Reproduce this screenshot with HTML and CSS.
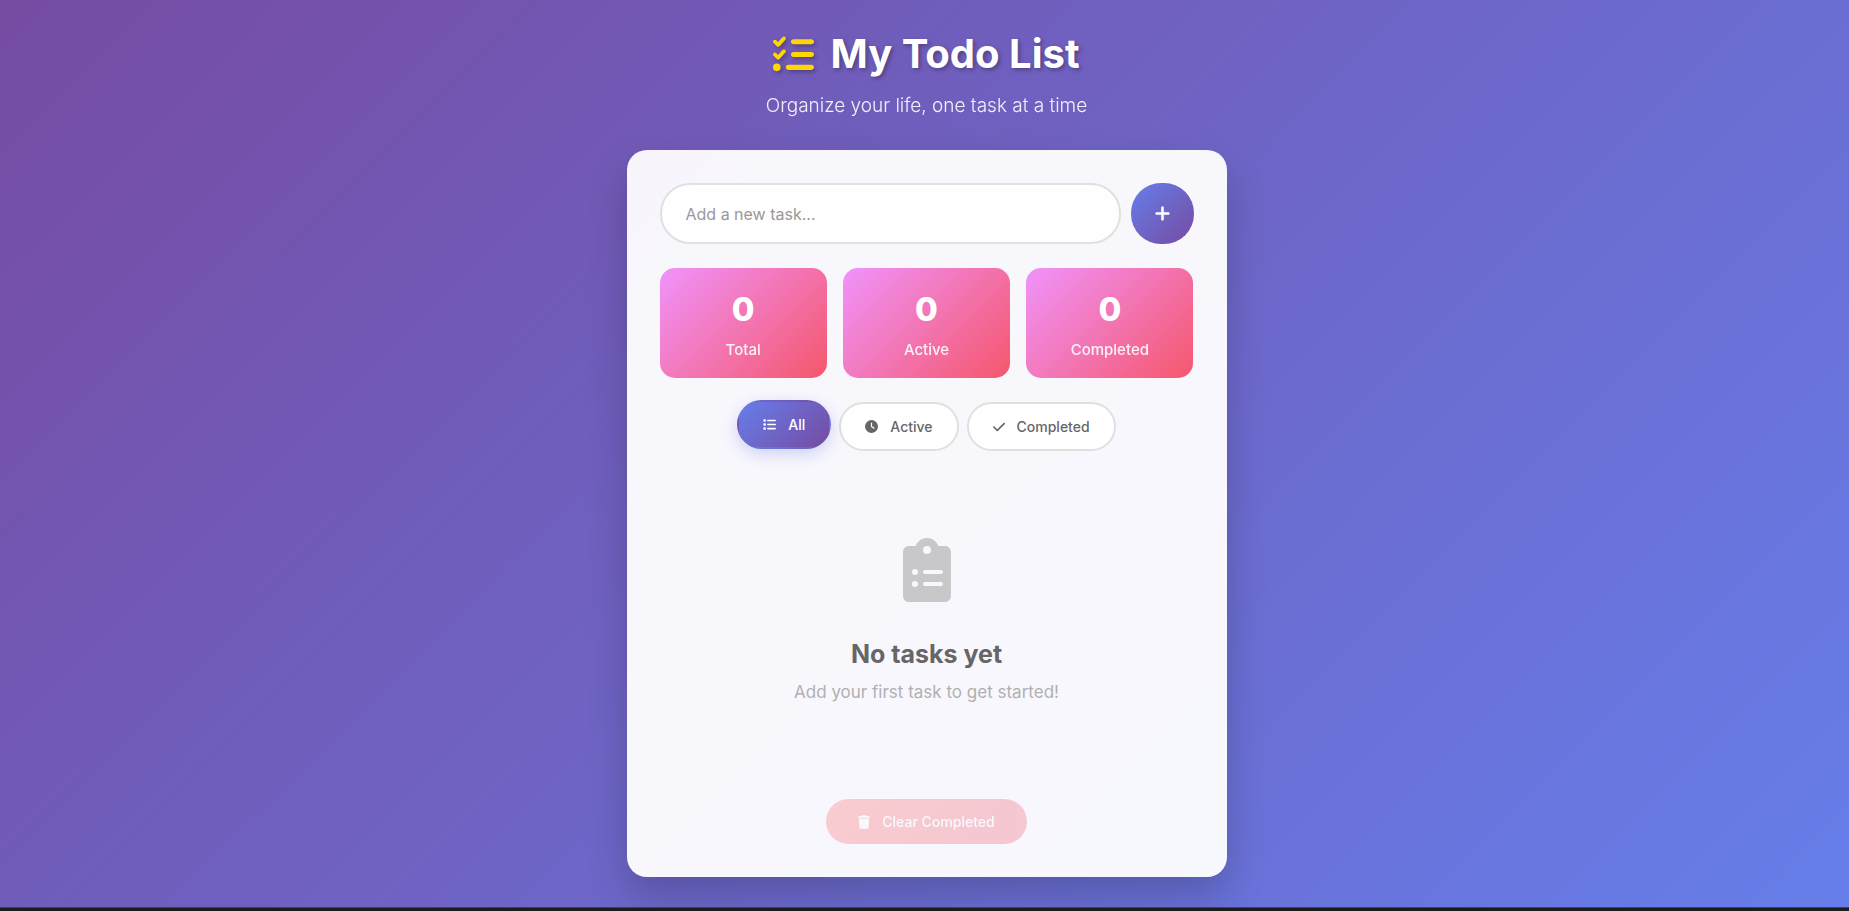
FILE: index.html
```html
<!DOCTYPE html>
<html lang="en">
<head>
<meta charset="utf-8">
<meta name="viewport" content="width=device-width, initial-scale=1">
<title>My Todo List</title>
<link rel="stylesheet" href="styles.css">
</head>
<body>
<div class="page">
  <header class="header">
    <h1 class="title">
      <svg class="title-icon" viewBox="0 0 512 512" aria-hidden="true"><path d="M152.1 38.2c9.9 8.9 10.7 24 1.8 33.9l-72 80c-4.4 4.9-10.6 7.8-17.2 7.9s-12.9-2.4-17.6-7L7 113C-2.3 103.6-2.3 88.4 7 79s24.6-9.4 33.9 0l22.1 22.1 55.1-61.2c8.9-9.9 24-10.7 33.9-1.8zm0 160c9.9 8.9 10.7 24 1.8 33.9l-72 80c-4.4 4.9-10.6 7.8-17.2 7.9s-12.9-2.4-17.6-7L7 273c-9.4-9.4-9.4-24.6 0-33.9s24.6-9.4 33.9 0l22.1 22.1 55.1-61.2c8.9-9.9 24-10.7 33.9-1.8zM224 96c0-17.7 14.3-32 32-32H480c17.7 0 32 14.3 32 32s-14.3 32-32 32H256c-17.7 0-32-14.3-32-32zm0 160c0-17.7 14.3-32 32-32H480c17.7 0 32 14.3 32 32s-14.3 32-32 32H256c-17.7 0-32-14.3-32-32zM160 416c0-17.7 14.3-32 32-32H480c17.7 0 32 14.3 32 32s-14.3 32-32 32H192c-17.7 0-32-14.3-32-32zM48 368a48 48 0 1 1 0 96 48 48 0 1 1 0-96z"/></svg>
      <span>My Todo List</span>
    </h1>
    <p class="subtitle">Organize your life, one task at a time</p>
  </header>

  <main class="card">
    <form class="add-form">
      <input class="add-input" type="text" placeholder="Add a new task..." aria-label="New task">
      <button class="add-button" type="button" aria-label="Add task">
        <svg class="plus-icon" viewBox="0 0 448 512" aria-hidden="true"><path d="M256 80c0-17.7-14.3-32-32-32s-32 14.3-32 32V224H48c-17.7 0-32 14.3-32 32s14.3 32 32 32H192V432c0 17.7 14.3 32 32 32s32-14.3 32-32V288H400c17.7 0 32-14.3 32-32s-14.3-32-32-32H256V80z"/></svg>
      </button>
    </form>

    <section class="stats" aria-label="Task counts">
      <div class="stat"><span class="stat-number">0</span><span class="stat-label">Total</span></div>
      <div class="stat"><span class="stat-number">0</span><span class="stat-label">Active</span></div>
      <div class="stat"><span class="stat-number">0</span><span class="stat-label">Completed</span></div>
    </section>

    <nav class="filters" aria-label="Filter tasks">
      <button class="filter filter-active" type="button">
        <svg class="icon" viewBox="0 0 512 512" aria-hidden="true"><path d="M40 48C26.7 48 16 58.7 16 72v48c0 13.3 10.7 24 24 24H88c13.3 0 24-10.7 24-24V72c0-13.3-10.7-24-24-24H40zM192 64c-17.7 0-32 14.3-32 32s14.3 32 32 32H480c17.7 0 32-14.3 32-32s-14.3-32-32-32H192zm0 160c-17.7 0-32 14.3-32 32s14.3 32 32 32H480c17.7 0 32-14.3 32-32s-14.3-32-32-32H192zm0 160c-17.7 0-32 14.3-32 32s14.3 32 32 32H480c17.7 0 32-14.3 32-32s-14.3-32-32-32H192zM16 232v48c0 13.3 10.7 24 24 24H88c13.3 0 24-10.7 24-24V232c0-13.3-10.7-24-24-24H40c-13.3 0-24 10.7-24 24zM40 368c-13.3 0-24 10.7-24 24v48c0 13.3 10.7 24 24 24H88c13.3 0 24-10.7 24-24V392c0-13.3-10.7-24-24-24H40z"/></svg>
        <span>All</span>
      </button>
      <button class="filter" type="button">
        <svg class="icon" viewBox="0 0 512 512" aria-hidden="true"><path fill-rule="evenodd" d="M256 0a256 256 0 1 1 0 512A256 256 0 1 1 256 0zM232 120V256c0 8 4 15.5 10.7 20l96 64c11 7.4 25.9 4.4 33.3-6.7s4.4-25.9-6.7-33.3L280 243.2V120c0-13.3-10.7-24-24-24s-24 10.7-24 24z"/></svg>
        <span>Active</span>
      </button>
      <button class="filter" type="button">
        <svg class="icon icon-narrow" viewBox="0 0 448 512" aria-hidden="true"><path d="M438.6 105.4c12.5 12.5 12.5 32.8 0 45.3l-256 256c-12.5 12.5-32.8 12.5-45.3 0l-128-128c-12.5-12.5-12.5-32.8 0-45.3s32.8-12.5 45.3 0L160 338.7 393.4 105.4c12.5-12.5 32.8-12.5 45.3 0z"/></svg>
        <span>Completed</span>
      </button>
    </nav>

    <section class="empty">
      <svg class="empty-icon" viewBox="0 0 384 512" aria-hidden="true"><path fill-rule="evenodd" d="M192 0c-41.8 0-77.4 26.7-90.5 64H48C21.5 64 0 85.5 0 112V464c0 26.5 21.5 48 48 48H336c26.5 0 48-21.5 48-48V112c0-26.5-21.5-48-48-48H282.5C269.4 26.7 233.8 0 192 0zm0 64a32 32 0 1 1 0 64 32 32 0 1 1 0-64zM72 272a24 24 0 1 1 48 0 24 24 0 1 1-48 0zm104-16H304c8.8 0 16 7.2 16 16s-7.2 16-16 16H176c-8.8 0-16-7.2-16-16s7.2-16 16-16zM72 368a24 24 0 1 1 48 0 24 24 0 1 1-48 0zm104-16H304c8.8 0 16 7.2 16 16s-7.2 16-16 16H176c-8.8 0-16-7.2-16-16s7.2-16 16-16z"/></svg>
      <h2 class="empty-title">No tasks yet</h2>
      <p class="empty-text">Add your first task to get started!</p>
    </section>

    <button class="clear-button" type="button" disabled>
      <svg class="icon icon-narrow" viewBox="0 0 448 512" aria-hidden="true"><path d="M135.2 17.7L128 32H32C14.3 32 0 46.3 0 64S14.3 96 32 96H416c17.7 0 32-14.3 32-32s-14.3-32-32-32H320l-7.2-14.3C307.4 6.8 296.3 0 284.2 0H163.8c-12.1 0-23.2 6.8-28.6 17.7zM416 128H32L53.2 467c1.6 25.3 22.6 45 47.9 45H346.9c25.3 0 46.3-19.7 47.9-45L416 128z"/></svg>
      <span>Clear Completed</span>
    </button>
  </main>
</div>
<div class="bottom-bar"></div>
</body>
</html>
```

FILE: styles.css
```css
* {
  box-sizing: border-box;
  margin: 0;
  padding: 0;
}

body {
  display: flex;
  flex-direction: column;
  min-height: 100vh;
  font-family: Inter, "Open Sans", sans-serif;
  background: linear-gradient(135deg, #764ba2 0%, #667eea 100%);
}

button,
input {
  font-family: inherit;
}

svg {
  display: block;
  flex: none;
  fill: currentColor;
}

.page {
  flex: 1;
  width: 100%;
  max-width: 640px;
  margin: 0 auto;
  padding: 20px 18px 30px 22px;
}

.header {
  margin-bottom: 30px;
  text-align: center;
  color: #fff;
}

.title {
  display: flex;
  justify-content: center;
  align-items: center;
  gap: 16px;
  margin-bottom: 6px;
  padding-top: 2px;
  font-size: 40px;
  font-weight: 700;
  line-height: 64px;
  text-shadow: 2px 2px 4px rgba(0, 0, 0, 0.3);
}

.title-icon {
  width: 41px;
  height: 41px;
  color: #ffd700;
  filter: drop-shadow(2px 2px 2px rgba(0, 0, 0, 0.3));
}

.subtitle {
  font-size: 19px;
  font-weight: 300;
  line-height: 28px;
  opacity: 0.9;
}

.card {
  padding: 33px;
  border-radius: 20px;
  background: rgba(255, 255, 255, 0.95);
  box-shadow: 0 20px 40px rgba(0, 0, 0, 0.2);
}

.add-form {
  display: flex;
  gap: 10px;
  margin-bottom: 24px;
}

.add-input {
  flex: 1;
  min-width: 0;
  height: 61px;
  padding: 0 24px;
  border: 2px solid #e0e0e0;
  border-radius: 30px;
  background: rgba(255, 255, 255, 0.8);
  font-size: 16px;
  color: #333;
}

.add-input::placeholder {
  color: #999;
}

.add-button {
  display: flex;
  justify-content: center;
  align-items: center;
  width: 63px;
  border: 0;
  border-radius: 30px;
  background: linear-gradient(135deg, #667eea 0%, #764ba2 100%);
  color: #fff;
}

.plus-icon {
  width: 17px;
  height: 17px;
  stroke: currentColor;
  stroke-width: 16px;
}

.stats {
  display: grid;
  grid-template-columns: repeat(3, 1fr);
  gap: 16px;
  margin-bottom: 24px;
}

.stat {
  display: flex;
  flex-direction: column;
  padding: 16px;
  border-radius: 15px;
  background: linear-gradient(135deg, #f093fb 0%, #f5576c 100%);
  text-align: center;
  color: #fff;
}

.stat-number {
  margin-bottom: 4px;
  font-size: 33px;
  font-weight: 800;
  line-height: 50px;
}

.stat-label {
  font-size: 15px;
  font-weight: 500;
  line-height: 24px;
  opacity: 0.9;
}

.filters {
  display: flex;
  flex-wrap: wrap;
  justify-content: center;
  gap: 8px;
  margin-bottom: 24px;
}

.filter {
  display: flex;
  align-items: center;
  gap: 12px;
  padding: 12px 24px;
  border: 2px solid #e0e0e0;
  border-radius: 25px;
  background: #fff;
  font-size: 14px;
  font-weight: 500;
  line-height: 21px;
  color: #666;
}

.filter-active {
  border-color: transparent;
  background: linear-gradient(135deg, #667eea 0%, #764ba2 100%);
  color: #fff;
  box-shadow: 0 5px 15px rgba(102, 126, 234, 0.3);
  transform: translateY(-2px);
}

.icon {
  width: 13px;
  height: 13px;
}

.icon-narrow {
  width: 12px;
  height: 14px;
}

.empty {
  display: flex;
  flex-direction: column;
  align-items: center;
  padding: 63px 16px 64px;
}

.empty-icon {
  width: 48px;
  height: 64px;
  margin-bottom: 33px;
  color: #c8c8ca;
}

.empty-title {
  margin-bottom: 7px;
  font-size: 25px;
  font-weight: 700;
  line-height: 38px;
  color: #666;
}

.empty-text {
  font-size: 17px;
  line-height: 25px;
  color: #b0b0b2;
}

.clear-button {
  display: flex;
  align-items: center;
  gap: 12px;
  margin: 30px auto 0;
  padding: 12px 32px;
  border: 0;
  border-radius: 25px;
  background: linear-gradient(135deg, #ff6b6b 0%, #ee5a6f 100%);
  font-size: 14px;
  font-weight: 500;
  line-height: 21px;
  color: #fff;
  opacity: 0.3;
}

.bottom-bar {
  height: 4px;
  border-top: 1px solid #444;
  background: #1c1c1c;
}
```
